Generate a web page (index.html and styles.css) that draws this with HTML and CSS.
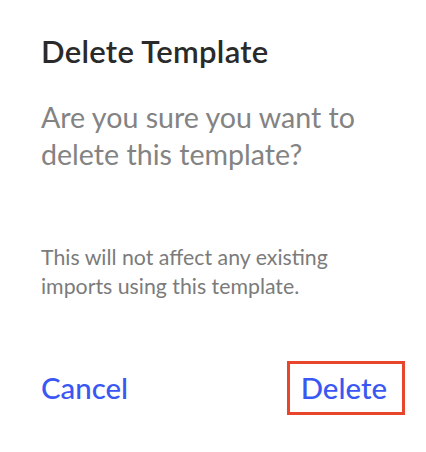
FILE: index.html
```html
<!DOCTYPE html>
<html>
<head>
<meta charset="utf-8">
<link rel="stylesheet" href="styles.css">
</head>
<body>
<div class="dialog">
  <h2 class="title">Delete Template</h2>
  <p class="question">Are you sure you want to delete this template?</p>
  <p class="note">This will not affect any existing imports using this template.</p>
  <div class="actions">
    <button class="btn cancel">Cancel</button>
    <button class="btn delete">Delete</button>
  </div>
</div>
</body>
</html>
```
FILE: styles.css
```css
html, body {
  margin: 0;
  padding: 0;
  background: #ffffff;
}
body {
  font-family: Lato, "Liberation Sans", sans-serif;
  width: 426px;
  height: 452px;
  overflow: hidden;
}
.dialog {
  padding: 33px 21px 0 41px;
  display: flex;
  flex-direction: column;
}
.title {
  margin: 0;
  font-size: 31px;
  line-height: 36px;
  font-weight: 600;
  letter-spacing: 0.3px;
  color: #2a2a2a;
}
.question {
  margin: 30px 0 0;
  font-size: 28.6px;
  line-height: 37px;
  color: #838383;
  width: 340px;
}
.note {
  margin: 70px 0 0;
  font-size: 21.3px;
  line-height: 29px;
  color: #7b7b7b;
  width: 330px;
}
.actions {
  margin-top: 60px;
  display: flex;
  justify-content: space-between;
  align-items: center;
}
.btn {
  font-family: inherit;
  font-size: 29.4px;
  font-weight: 500;
  color: #3a57f4;
  background: none;
  border: 3px solid transparent;
  padding: 9px 15px 9px 11px;
  margin: 0;
  line-height: 30px;
  cursor: pointer;
}
.cancel {
  padding-left: 0;
  border: none;
}
.delete {
  border-color: #e8462c;
}
```
